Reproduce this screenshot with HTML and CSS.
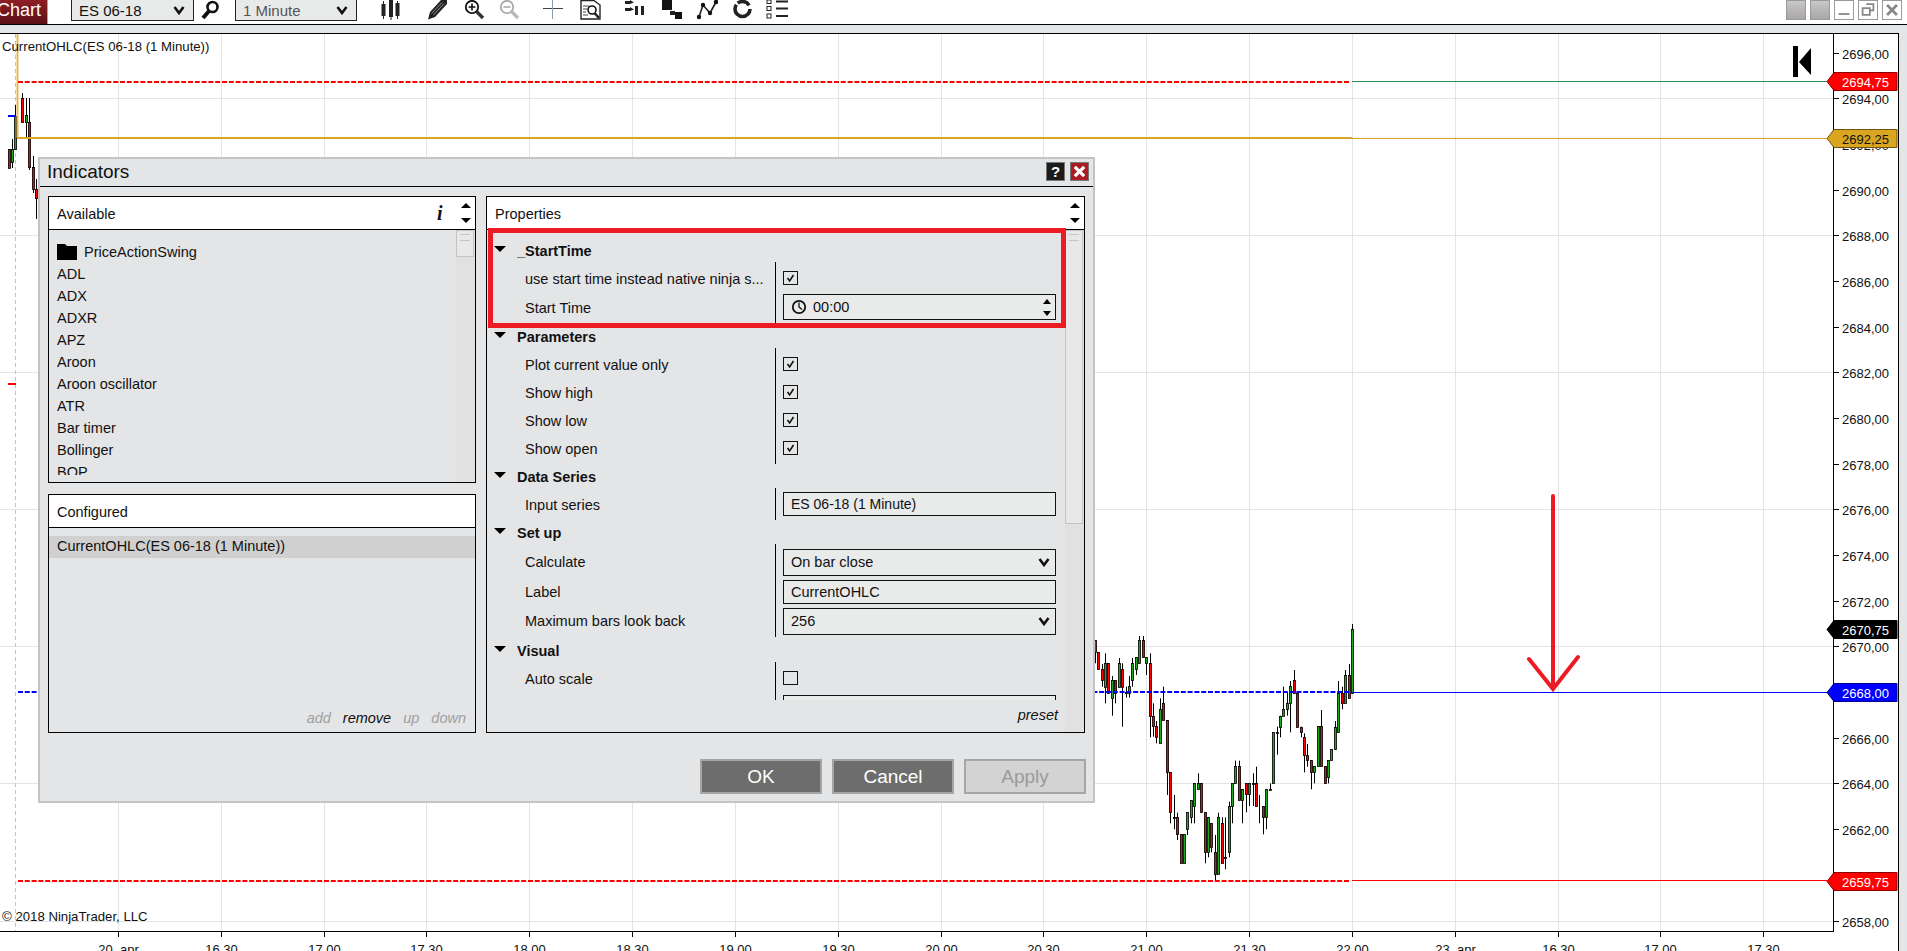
FILE: index.html
```html
<!DOCTYPE html>
<html lang="en">
<head>
    <meta charset="UTF-8">
    <title>Chart - ES 06-18</title>
    <link rel="stylesheet" href="styles.css">
</head>
<body>
    <!-- Chart window toolbar -->
    <div class="toolbar">
        <div class="chart-tab">Chart</div>
        <div class="tool-select instrument">
            <span>ES 06-18</span>
            <svg class="chevron" viewBox="0 0 12 10"><path d="M1.5 2L6 8L10.5 2" fill="none" stroke="#111" stroke-width="2.6"/></svg>
        </div>
        <svg class="search-icon" viewBox="0 0 20 20">
            <circle cx="12.5" cy="7" r="5" fill="none" stroke="#111" stroke-width="2.6"/>
            <path d="M9 11L3 18" stroke="#111" stroke-width="4"/>
        </svg>
        <div class="tool-select interval">
            <span>1 Minute</span>
            <svg class="chevron" viewBox="0 0 12 10"><path d="M1.5 2L6 8L10.5 2" fill="none" stroke="#111" stroke-width="2.6"/></svg>
        </div>
        <div class="tool-icons">
            <svg viewBox="0 0 22 20">
                <path d="M3.5 1V19M11 0V20M17.5 1V19" stroke="#222" stroke-width="1"/>
                <rect x="1.5" y="4" width="4" height="12" fill="#222"/>
                <rect x="9" y="0" width="4" height="17" fill="#222"/>
                <rect x="15.5" y="3" width="4" height="13" fill="#222"/>
            </svg>
            <svg viewBox="0 0 22 20">
                <path d="M1 19.5L3 12L14 0H20V4L8 17Z" fill="#222"/>
                <path d="M4.5 13.5L15 2.5M6.5 15L17 3.5" stroke="#bbb" stroke-width="0.7"/>
            </svg>
            <svg viewBox="0 0 22 20">
                <circle cx="8" cy="7" r="6.2" fill="none" stroke="#111" stroke-width="1.8"/>
                <path d="M8 3.5V10.5M4.5 7H11.5" stroke="#111" stroke-width="1.6"/>
                <path d="M12.5 11.5L19 18" stroke="#333" stroke-width="3.4"/>
            </svg>
            <svg viewBox="0 0 22 20">
                <circle cx="8" cy="7" r="6.2" fill="none" stroke="#aaa" stroke-width="1.8"/>
                <path d="M4.5 7H11.5" stroke="#aaa" stroke-width="1.6"/>
                <path d="M12.5 11.5L19 18" stroke="#bbb" stroke-width="3.4"/>
            </svg>
            <svg viewBox="0 0 22 20">
                <path d="M1 8.5H21" stroke="#444"/>
                <path d="M10.5 0V19" stroke="#8a9bb0"/>
            </svg>
            <svg viewBox="0 0 22 20">
                <path d="M1 0.5H14L20 5V19H1Z" fill="#fff" stroke="#222" stroke-width="1.4"/>
                <path d="M3 6H9M3 9H7M3 12H6M3 15H8" stroke="#444"/>
                <circle cx="12" cy="10" r="4" fill="#fff" stroke="#111" stroke-width="1.6"/>
                <path d="M14.5 13L19 18" stroke="#222" stroke-width="2.6"/>
            </svg>
            <svg viewBox="0 0 22 20">
                <path d="M1 1H6V0L10 2.5L6 4H1ZM1 8H6V7L10 9.5L6 11H1Z" fill="#222"/>
                <rect x="11" y="6" width="3" height="9" fill="#222"/>
                <rect x="17" y="6" width="3" height="9" fill="#222"/>
            </svg>
            <svg viewBox="0 0 22 20">
                <rect x="1" y="0" width="10" height="10" fill="#111"/>
                <rect x="9" y="11" width="5" height="4" fill="#222"/>
                <rect x="14" y="12" width="7" height="7" fill="#111"/>
            </svg>
            <svg viewBox="0 0 22 20">
                <path d="M3 17L7 5L14 13L20 2" fill="none" stroke="#222" stroke-width="1.6"/>
                <circle cx="3" cy="17" r="2.2" fill="#111"/>
                <circle cx="7" cy="5" r="2.2" fill="#111"/>
                <circle cx="14" cy="13" r="2.2" fill="#111"/>
                <circle cx="20" cy="2" r="2.2" fill="#111"/>
            </svg>
            <svg viewBox="0 0 22 20">
                <circle cx="10.5" cy="9" r="7.5" fill="none" stroke="#222" stroke-width="3.6" stroke-dasharray="28 2 13 4"/>
            </svg>
            <svg viewBox="0 0 22 20">
                <path d="M10 1.5H22M10 8.5H22M10 16H22" stroke="#222" stroke-width="2"/>
                <rect x="1" y="0" width="4" height="3.5" fill="none" stroke="#222"/>
                <rect x="1" y="6.5" width="4" height="4" fill="none" stroke="#222"/>
                <rect x="1" y="14" width="4" height="4" fill="none" stroke="#222"/>
            </svg>
        </div>
        <div class="window-buttons">
            <div class="win-btn win-gray"></div>
            <div class="win-btn win-gray"></div>
            <div class="win-btn">
                <svg viewBox="0 0 20 20"><path d="M4 14.5H16" stroke="#888" stroke-width="2"/></svg>
            </div>
            <div class="win-btn">
                <svg viewBox="0 0 20 20"><path d="M8 3.5H16V10.5H12M4 8H12V15.5H4Z" fill="none" stroke="#888" stroke-width="2"/></svg>
            </div>
            <div class="win-btn">
                <svg viewBox="0 0 20 20"><path d="M4.5 4.5L15.5 15.5M15.5 4.5L4.5 15.5" stroke="#888" stroke-width="3"/></svg>
            </div>
        </div>
    </div>

    <!-- Price chart, filled in by chart.js -->
    <div class="chart-area">
        <svg id="chart" class="chart-svg" viewBox="0 34 1898 917"></svg>
    </div>

    <!-- Indicators dialog -->
    <div class="dialog">
        <div class="dialog-title">
            <span>Indicators</span>
            <div class="dialog-title-buttons">
                <div class="title-btn title-help">?</div>
                <div class="title-btn title-close">
                    <svg viewBox="0 0 16 16"><path d="M3 3L13 13M13 3L3 13" stroke="#fff" stroke-width="3.4"/></svg>
                </div>
            </div>
        </div>

        <div class="dialog-body">
            <div class="left-col">
                <div class="panel available">
                    <div class="panel-header">
                        <span class="panel-title">Available</span>
                        <span class="info-mark">i</span>
                        <div class="header-arrows"><i class="arrow-up"></i><i class="arrow-down"></i></div>
                    </div>
                    <div class="panel-content">
                        <div class="indicator-list">
                            <div class="indicator-row">
                                <svg class="folder-icon" viewBox="0 0 20 16"><path d="M0 0H8L10 2H20V16H0Z" fill="#000"/></svg>
                                PriceActionSwing
                            </div>
                            <div class="indicator-row">ADL</div>
                            <div class="indicator-row">ADX</div>
                            <div class="indicator-row">ADXR</div>
                            <div class="indicator-row">APZ</div>
                            <div class="indicator-row">Aroon</div>
                            <div class="indicator-row">Aroon oscillator</div>
                            <div class="indicator-row">ATR</div>
                            <div class="indicator-row">Bar timer</div>
                            <div class="indicator-row">Bollinger</div>
                            <div class="indicator-row">BOP</div>
                        </div>
                        <div class="scroll-col"><div class="scroll-thumb thumb-small"></div></div>
                    </div>
                </div>

                <div class="panel configured">
                    <div class="panel-header">
                        <span class="panel-title">Configured</span>
                    </div>
                    <div class="configured-content">
                        <div class="configured-row">CurrentOHLC(ES 06-18 (1 Minute))</div>
                        <div class="panel-actions">
                            <span class="action-off">add</span>
                            <span>remove</span>
                            <span class="action-off">up</span>
                            <span class="action-off">down</span>
                        </div>
                    </div>
                </div>
            </div>

            <div class="panel properties">
                <div class="panel-header">
                    <span class="panel-title">Properties</span>
                    <div class="header-arrows"><i class="arrow-up"></i><i class="arrow-down"></i></div>
                </div>
                <div class="panel-content">
                    <div class="prop-main">
                        <div class="prop-scroll">
                            <div class="prop-head"><i class="arrow-down"></i>_StartTime</div>
                            <div class="prop-rows">
                                <div class="prop-row">
                                    <div class="prop-label">use start time instead native ninja s...</div>
                                    <div class="checkbox checked"><svg viewBox="0 0 15 14"><path d="M4 7L6.5 10.5L11 3.5" fill="none" stroke="#111" stroke-width="1.8"/></svg></div>
                                </div>
                                <div class="prop-row row-tall">
                                    <div class="prop-label">Start Time</div>
                                    <div class="prop-input time-input">
                                        <svg class="clock-icon" viewBox="0 0 16 16">
                                            <circle cx="8" cy="8" r="6.2" fill="none" stroke="#111" stroke-width="1.8"/>
                                            <path d="M8 3.5V8L11 10.5" fill="none" stroke="#111" stroke-width="1.3"/>
                                        </svg>
                                        <span>00:00</span>
                                        <div class="spin"><i class="arrow-up"></i><i class="arrow-down"></i></div>
                                    </div>
                                </div>
                            </div>

                            <div class="prop-head"><i class="arrow-down"></i>Parameters</div>
                            <div class="prop-rows">
                                <div class="prop-row">
                                    <div class="prop-label">Plot current value only</div>
                                    <div class="checkbox checked"><svg viewBox="0 0 15 14"><path d="M4 7L6.5 10.5L11 3.5" fill="none" stroke="#111" stroke-width="1.8"/></svg></div>
                                </div>
                                <div class="prop-row">
                                    <div class="prop-label">Show high</div>
                                    <div class="checkbox checked"><svg viewBox="0 0 15 14"><path d="M4 7L6.5 10.5L11 3.5" fill="none" stroke="#111" stroke-width="1.8"/></svg></div>
                                </div>
                                <div class="prop-row">
                                    <div class="prop-label">Show low</div>
                                    <div class="checkbox checked"><svg viewBox="0 0 15 14"><path d="M4 7L6.5 10.5L11 3.5" fill="none" stroke="#111" stroke-width="1.8"/></svg></div>
                                </div>
                                <div class="prop-row">
                                    <div class="prop-label">Show open</div>
                                    <div class="checkbox checked"><svg viewBox="0 0 15 14"><path d="M4 7L6.5 10.5L11 3.5" fill="none" stroke="#111" stroke-width="1.8"/></svg></div>
                                </div>
                            </div>

                            <div class="prop-head"><i class="arrow-down"></i>Data Series</div>
                            <div class="prop-rows">
                                <div class="prop-row">
                                    <div class="prop-label">Input series</div>
                                    <div class="prop-input series-input">ES 06-18 (1 Minute)</div>
                                </div>
                            </div>

                            <div class="prop-head"><i class="arrow-down"></i>Set up</div>
                            <div class="prop-rows setup-rows">
                                <div class="prop-row row-tall">
                                    <div class="prop-label">Calculate</div>
                                    <div class="prop-input prop-select">
                                        <span>On bar close</span>
                                        <svg class="chevron" viewBox="0 0 12 10"><path d="M1.5 2L6 8L10.5 2" fill="none" stroke="#111" stroke-width="2.6"/></svg>
                                    </div>
                                </div>
                                <div class="prop-row row-mid">
                                    <div class="prop-label">Label</div>
                                    <div class="prop-input label-input">CurrentOHLC</div>
                                </div>
                                <div class="prop-row row-tall">
                                    <div class="prop-label">Maximum bars look back</div>
                                    <div class="prop-input prop-select">
                                        <span>256</span>
                                        <svg class="chevron" viewBox="0 0 12 10"><path d="M1.5 2L6 8L10.5 2" fill="none" stroke="#111" stroke-width="2.6"/></svg>
                                    </div>
                                </div>
                            </div>

                            <div class="prop-head"><i class="arrow-down"></i>Visual</div>
                            <div class="prop-rows">
                                <div class="prop-row">
                                    <div class="prop-label">Auto scale</div>
                                    <div class="checkbox"></div>
                                </div>
                                <div class="prop-row">
                                    <div class="prop-label"></div>
                                    <div class="prop-input label-input"></div>
                                </div>
                            </div>
                        </div>
                        <div class="prop-footer">preset</div>
                    </div>
                    <div class="scroll-col"><div class="scroll-thumb thumb-large"></div></div>
                </div>
                <!-- Red annotation drawn over the screenshot -->
                <div class="highlight-box"></div>
            </div>
        </div>

        <div class="dialog-buttons">
            <div class="dialog-btn">OK</div>
            <div class="dialog-btn">Cancel</div>
            <div class="dialog-btn btn-disabled">Apply</div>
        </div>
    </div>

    <script src="chart.js"></script>
</body>
</html>
```

FILE: styles.css
```css
:root {
    --color-window: #e4e5e7;
    --color-scroll: #e1e1e1;
    --color-text: #111111;
    --color-line: #000000;
    --color-annotation: #ed1c24;
}

* {
    margin: 0;
    padding: 0;
    box-sizing: border-box;
}

html,
body {
    height: 951px;
    overflow: hidden;
}

body {
    position: relative;
    font-family: "Liberation Sans", Arial, sans-serif;
    font-size: 14.5px;
    color: var(--color-text);
    background-color: var(--color-window);
}

/* Toolbar */
.toolbar {
    display: flex;
    height: 25px;
    background-color: #ffffff;
    border-bottom: 1px solid var(--color-line);
    overflow: hidden;
}

.chart-tab {
    width: 48px;
    height: 24px;
    padding-left: 0;
    text-indent: -3px;
    line-height: 20px;
    font-size: 18px;
    color: #ffffff;
    background: linear-gradient(#8d1f26, #5c0f14);
    border-right: 1px solid #b9a0a0;
    overflow: hidden;
}

.tool-select {
    display: flex;
    align-items: center;
    justify-content: space-between;
    height: 22px;
    margin-top: -1px;
    padding: 0 8px 0 7px;
    background-color: #e8e9e9;
    border: 1px solid #222222;
    font-size: 15px;
}

.instrument {
    width: 123px;
    margin-left: 23px;
}

.interval {
    width: 122px;
    margin-left: 15px;
    color: #555555;
}

.chevron {
    width: 12px;
    height: 10px;
}

.search-icon {
    width: 20px;
    height: 20px;
    margin-left: 6px;
}

.tool-icons {
    display: grid;
    grid-template-columns: 47px 37px 35px 43px 38px 44px 37px 35px 36px 34px 22px;
    margin-left: 23px;
}

.tool-icons svg {
    width: 22px;
    height: 20px;
}

.window-buttons {
    display: flex;
    gap: 4px;
    margin-left: auto;
    margin-right: 5px;
}

.win-btn {
    width: 20px;
    height: 20px;
    background-color: #ffffff;
    border: 1px solid #9a9a9a;
}

.win-btn svg {
    display: block;
    width: 18px;
    height: 18px;
}

.win-gray {
    background: linear-gradient(#c9c7c7, #a9a6a6);
}

/* Chart */
.chart-area {
    margin-top: 8px;
    margin-right: 8px;
    height: 918px;
    background-color: #ffffff;
    border-top: 1px solid var(--color-line);
    border-right: 1px solid var(--color-line);
}

.chart-svg {
    display: block;
    width: 1898px;
    height: 917px;
    font-family: "Liberation Sans", Arial, sans-serif;
    font-size: 13px;
}

.chart-note {
    font-size: 13.2px;
}

/* Dialog */
.dialog {
    position: absolute;
    left: 38px;
    top: 157px;
    width: 1057px;
    height: 646px;
    background-color: var(--color-window);
    border: 2px solid #c2c3c5;
}

.dialog-title {
    display: flex;
    align-items: center;
    justify-content: space-between;
    height: 28px;
    padding: 0 4px 2px 7px;
    font-size: 19px;
    border-bottom: 1px solid var(--color-line);
}

.dialog-title-buttons {
    display: flex;
    gap: 5px;
}

.title-btn {
    display: flex;
    align-items: center;
    justify-content: center;
    width: 19px;
    height: 19px;
    border: 1px solid #777777;
}

.title-help {
    background-color: #1b1b1b;
    color: #ffffff;
    font-size: 15px;
    font-weight: bold;
}

.title-close {
    background-color: #a81c24;
}

.title-close svg {
    width: 15px;
    height: 15px;
}

.dialog-body {
    display: flex;
    gap: 10px;
    height: 537px;
    margin-top: 9px;
    padding-left: 8px;
}

.left-col {
    display: flex;
    flex-direction: column;
    gap: 11px;
    width: 428px;
}

.panel {
    display: flex;
    flex-direction: column;
    border: 1px solid var(--color-line);
}

.available {
    height: 287px;
}

.configured {
    height: 239px;
}

.properties {
    position: relative;
    width: 599px;
}

.panel-header {
    display: flex;
    align-items: center;
    flex-shrink: 0;
    height: 33px;
    padding-left: 8px;
    background-color: #ffffff;
    border-bottom: 1px solid var(--color-line);
}

.panel-title {
    flex: 1;
    padding-top: 2px;
}

.info-mark {
    width: 19px;
    font-family: "Liberation Serif", serif;
    font-size: 20px;
    font-style: italic;
    font-weight: bold;
}

.header-arrows {
    display: flex;
    flex-direction: column;
    align-items: center;
    justify-content: center;
    gap: 10px;
    width: 19px;
}

.arrow-up,
.arrow-down {
    display: block;
    width: 0;
    height: 0;
    border-left: 5px solid transparent;
    border-right: 5px solid transparent;
}

.arrow-up {
    border-bottom: 5px solid #000000;
}

.arrow-down {
    border-top: 5px solid #000000;
}

.panel-content {
    display: flex;
    flex: 1;
    min-height: 0;
}

.indicator-list {
    flex: 1;
    height: 245px;
    padding: 10px 0 0 8px;
    overflow: hidden;
}

.indicator-row {
    display: flex;
    align-items: center;
    gap: 7px;
    height: 22px;
}

.indicator-row:first-child {
    height: 23px;
}

.folder-icon {
    width: 20px;
    height: 16px;
}

.scroll-col {
    flex-shrink: 0;
    width: 19px;
    background-color: var(--color-scroll);
}

.scroll-thumb {
    width: 18px;
    padding: 3px 2px;
    background-color: #e8e8e8;
    border: 1px solid #c4c4c4;
}

.scroll-thumb::before {
    content: "";
    display: block;
    height: 5px;
    margin: 0 1px;
    border-top: 1px solid #c4c4c4;
    border-bottom: 1px solid #c4c4c4;
}

.thumb-small {
    height: 27px;
}

.thumb-large {
    height: 294px;
}

/* Configured list */
.configured-content {
    display: flex;
    flex-direction: column;
    flex: 1;
    padding-top: 8px;
}

.configured-row {
    height: 22px;
    padding-left: 8px;
    line-height: 21px;
    background-color: #d0d0d0;
}

.panel-actions {
    display: flex;
    justify-content: flex-end;
    gap: 12px;
    margin-top: auto;
    padding: 0 9px 6px 0;
    font-style: italic;
}

.action-off {
    color: #a0a0a0;
}

/* Property grid */
.prop-main {
    display: flex;
    flex-direction: column;
    flex: 1;
    min-width: 0;
}

.prop-scroll {
    height: 470px;
    padding-top: 7px;
    overflow: hidden;
}

.prop-head {
    display: flex;
    align-items: center;
    height: 25px;
    padding: 3px 0 0 7px;
    font-weight: bold;
}

.prop-head .arrow-down {
    margin-right: 11px;
    border-left-width: 6px;
    border-right-width: 6px;
    border-top-width: 6px;
    transform: translateY(-2px);
}

.prop-rows {
    margin-bottom: -1px;
    padding: 3px 0 1px;
    background: linear-gradient(#000000, #000000) no-repeat 288px 0 / 1px 100%;
}

.setup-rows {
    margin-bottom: 0;
}

.prop-row {
    display: flex;
    align-items: center;
    height: 28px;
}

.row-tall {
    height: 30px;
}

.row-mid {
    height: 29px;
}

.prop-label {
    flex-shrink: 0;
    width: 296px;
    padding: 0 16px 0 38px;
    white-space: nowrap;
    overflow: hidden;
}

.checkbox {
    width: 15px;
    height: 14px;
    margin-bottom: 2px;
    border: 1px solid #111111;
}

.checkbox svg {
    display: block;
    width: 13px;
    height: 12px;
}

.prop-input {
    display: flex;
    align-items: center;
    width: 273px;
    padding-left: 7px;
    background-color: #e9eaea;
    border: 1px solid #111111;
}

.time-input {
    height: 26px;
    margin-bottom: 2px;
}

.clock-icon {
    width: 16px;
    height: 16px;
    margin-right: 6px;
}

.spin {
    display: flex;
    flex-direction: column;
    gap: 7px;
    margin-left: auto;
    margin-right: 4px;
}

.spin .arrow-up,
.spin .arrow-down {
    border-left-width: 4px;
    border-right-width: 4px;
}

.series-input {
    height: 24px;
    margin-bottom: 2px;
    font-size: 14px;
}

.label-input {
    height: 24px;
}

.prop-select {
    justify-content: space-between;
    height: 27px;
    padding-right: 5px;
}

.prop-footer {
    flex: 1;
    padding: 7px 7px 0 0;
    text-align: right;
    font-style: italic;
}

.highlight-box {
    position: absolute;
    left: 1px;
    top: 31px;
    width: 578px;
    height: 100px;
    border: 5px solid var(--color-annotation);
}

/* Dialog buttons */
.dialog-buttons {
    display: flex;
    justify-content: flex-end;
    gap: 10px;
    margin-top: 26px;
    padding-right: 7px;
}

.dialog-btn {
    display: flex;
    align-items: center;
    justify-content: center;
    width: 122px;
    height: 35px;
    font-size: 19px;
    color: #ffffff;
    background-color: #6d6d6d;
    border: 2px solid #a5a5a5;
}

.btn-disabled {
    color: #9a9a9a;
    background-color: #d3d3d3;
}
```

FILE: chart.js
```js
// Chart scale, worked out from the price and time axes
const priceY = (price) => 52.6 + (2696 - price) * 22.84;
const timeX = (i) => 118 + i * 102.83;
const AXIS_X = 1833;
const BOTTOM_Y = 931;
const LAST_BAR_X = 1352;

const timeLabels = ['20. apr', '16.30', '17.00', '17.30', '18.00', '18.30', '19.00', '19.30', '20.00',
    '20.30', '21.00', '21.30', '22.00', '23. apr', '16.30', '17.00', '17.30'];

// Bars at the far left of the chart: [x, wickTop, wickBottom, bodyTop, bodyBottom, up]
const leftBars = [
    [9, 149, 168, 149, 168, 0],
    [12, 139, 168, 149, 162, 1],
    [15, 105, 150, 116, 149, 1],
    [22, 93, 122, 98, 122, 0],
    [26, 98, 138, 115, 122, 1],
    [29, 98, 170, 122, 167, 0],
    [33, 156, 193, 167, 189, 0],
    [36, 179, 219, 189, 198, 0]
];

// Bars right of the dialog, one per minute up to 22:00, in 3x crop units:
// [wickTop, wickBottom, bodyTop, bodyBottom, up]
const rightBars = [
    [60, 130, 60, 97, 0], [97, 148, 97, 148, 0], [132, 200, 148, 181, 0], [100, 250, 130, 200, 1],
    [130, 218, 130, 218, 0], [168, 287, 181, 233, 1], [181, 250, 181, 218, 0], [114, 200, 130, 200, 1],
    [130, 320, 148, 200, 0], [200, 233, 217, 219, 0], [168, 233, 198, 218, 1], [114, 200, 130, 181, 1],
    [112, 165, 112, 148, 1], [48, 130, 60, 130, 1], [48, 112, 60, 112, 0], [112, 165, 112, 130, 1],
    [100, 352, 130, 287, 0], [250, 350, 287, 318, 0], [303, 370, 318, 352, 0], [235, 370, 268, 370, 1],
    [200, 300, 250, 300, 0], [300, 525, 300, 457, 0], [457, 610, 457, 577, 0], [525, 628, 591, 593, 0],
    [578, 660, 592, 643, 0], [643, 730, 643, 730, 0], [643, 730, 643, 730, 1], [577, 645, 577, 628, 1],
    [541, 610, 541, 592, 1], [490, 610, 490, 558, 1], [460, 508, 490, 508, 1], [490, 577, 490, 577, 0],
    [577, 730, 577, 697, 0], [592, 712, 592, 697, 1], [610, 697, 610, 680, 0], [645, 780, 697, 763, 0],
    [578, 763, 592, 763, 1], [592, 730, 610, 730, 0], [592, 748, 711, 713, 0], [545, 712, 558, 697, 1],
    [490, 610, 490, 558, 1], [422, 490, 438, 490, 1], [422, 541, 438, 541, 0], [508, 610, 508, 541, 1],
    [490, 577, 490, 523, 0], [490, 558, 490, 523, 1], [460, 558, 489, 491, 0], [440, 558, 490, 558, 0],
    [525, 610, 557, 559, 0], [558, 643, 558, 592, 0], [508, 628, 508, 592, 1], [490, 508, 507, 509, 0],
    [337, 490, 337, 490, 1], [320, 404, 336, 338, 0], [287, 352, 287, 320, 1], [200, 287, 268, 287, 1],
    [218, 287, 250, 268, 1], [183, 337, 198, 250, 1], [150, 218, 181, 218, 0], [218, 320, 218, 320, 0],
    [320, 352, 320, 337, 0], [340, 457, 352, 404, 0], [372, 440, 404, 421, 0], [421, 508, 421, 457, 0],
    [438, 490, 438, 457, 1], [318, 438, 318, 438, 1], [270, 438, 318, 438, 0], [438, 490, 438, 490, 0],
    [421, 490, 421, 472, 1], [388, 421, 388, 421, 1], [303, 388, 320, 388, 1], [183, 337, 218, 337, 1],
    [200, 268, 218, 250, 0], [150, 250, 166, 250, 1], [132, 233, 166, 233, 0], [12, 218, 28, 218, 1]
];

function line(x1, y1, x2, y2, stroke, width, dash) {
    const dashAttr = dash ? ` stroke-dasharray="${dash}"` : '';
    return `<line x1="${x1}" y1="${y1}" x2="${x2}" y2="${y2}" stroke="${stroke}" stroke-width="${width}"${dashAttr}/>`;
}

// x is a pixel centre; the body edges are snapped so the outlines stay sharp
function candle(x, wickTop, wickBottom, bodyTop, bodyBottom, up) {
    const fill = up ? '#1eaa1e' : '#ff0000';
    const top = Math.round(bodyTop) + 0.5;
    const height = Math.max(Math.round(bodyBottom) - Math.round(bodyTop), 0);
    return line(x, wickTop, x, wickBottom, '#000', 1)
        + `<rect x="${x - 1.1}" y="${top}" width="2.2" height="${height}" fill="${fill}" stroke="#000" stroke-width="0.8"/>`;
}

function priceTag(price, fill, textColor, edge) {
    const y = Math.round(priceY(price)) + 0.5;
    const points = `1827,${y} 1834,${y - 9} 1897,${y - 9} 1897,${y + 9} 1834,${y + 9}`;
    const label = price.toFixed(2).replace('.', ',');
    return `<polygon points="${points}" fill="${fill}" stroke="${edge}"/>`
        + `<text x="1842" y="${y + 5}" fill="${textColor}">${label}</text>`;
}

function drawChart() {
    let out = '';

    // Grid
    for (let p = 2694; p >= 2658; p -= 6) {
        const y = Math.round(priceY(p)) + 0.5;
        out += line(0, y, AXIS_X, y, '#e4e4e4', 1);
    }
    timeLabels.forEach((label, i) => {
        const x = Math.round(timeX(i)) + 0.5;
        out += line(x, 34, x, BOTTOM_Y, '#e4e4e4', 1);
    });
    out += line(15.5, 34, 15.5, BOTTOM_Y, '#c4c4c4', 1, '4 3');

    // Candles
    leftBars.forEach((b) => {
        out += candle(b[0] + 0.5, b[1], b[2], b[3], b[4], b[5]);
    });
    rightBars.forEach((b, i) => {
        const x = Math.round(LAST_BAR_X - (rightBars.length - 1 - i) * 3.43) + 0.5;
        out += candle(x, 620 + b[0] / 3, 620 + b[1] / 3, 620 + b[2] / 3, 620 + b[3] / 3, b[4]);
    });

    // Indicator levels: 2px dashed up to the last bar, then a 1px line to the axis
    out += line(17.5, 34, 17.5, 138, '#e6b84c', 2);
    out += line(18, 82, 1350, 82, '#ff0000', 2, '5 1.8');
    out += line(1352, 81.5, 1827, 81.5, '#2e8b57', 1);
    out += line(17, 138, 1352, 138, '#daa520', 2);
    out += line(1352, 138.5, 1827, 138.5, '#daa520', 1);
    out += line(18, 692, 1350, 692, '#0000ff', 2, '5 1.8');
    out += line(1352, 692.5, 1827, 692.5, '#0000ff', 1);
    out += line(18, 881, 1350, 881, '#ff0000', 2, '5 1.8');
    out += line(1352, 880.5, 1827, 880.5, '#ff0000', 1);
    out += line(8, 116, 16, 116, '#0000ff', 2);
    out += line(8, 384, 16, 384, '#ff0000', 2);

    // Axes
    out += line(AXIS_X + 0.5, 34, AXIS_X + 0.5, BOTTOM_Y, '#000', 1);
    out += line(0, BOTTOM_Y + 0.5, AXIS_X + 1, BOTTOM_Y + 0.5, '#000', 1);
    for (let p = 2696; p >= 2658; p -= 2) {
        const y = Math.round(priceY(p)) + 0.5;
        out += line(AXIS_X, y, AXIS_X + 6, y, '#000', 1);
        out += `<text x="1842" y="${y + 5}" fill="#111">${p},00</text>`;
    }
    timeLabels.forEach((label, i) => {
        const x = Math.round(timeX(i)) + 0.5;
        out += line(x, BOTTOM_Y, x, BOTTOM_Y + 6, '#000', 1);
        out += `<text x="${x}" y="954" text-anchor="middle" fill="#111">${label}</text>`;
    });

    // Current values on the price axis
    out += priceTag(2694.75, '#ff0000', '#fff', '#8a0000');
    out += priceTag(2692.25, '#daa520', '#111', '#6e5410');
    out += priceTag(2670.75, '#000000', '#fff', '#000');
    out += priceTag(2668, '#0000ff', '#fff', '#00008a');
    out += priceTag(2659.75, '#ff0000', '#fff', '#8a0000');

    // Chart texts and the jump-to-end marker
    out += '<text class="chart-note" x="2" y="51" fill="#111">CurrentOHLC(ES 06-18 (1 Minute))</text>';
    out += '<text class="chart-note" x="2" y="921" fill="#111">© 2018 NinjaTrader, LLC</text>';
    out += '<rect x="1793" y="46" width="5" height="31" fill="#000"/>';
    out += '<polygon points="1799,62 1811,48 1811,75" fill="#000"/>';

    // Red arrow annotation
    out += '<path d="M1553 496V689M1529 659L1553 689L1578 657" fill="none" stroke="#ed1c24" stroke-width="4" stroke-linecap="round"/>';

    document.getElementById('chart').innerHTML = out;
}

drawChart();
```
